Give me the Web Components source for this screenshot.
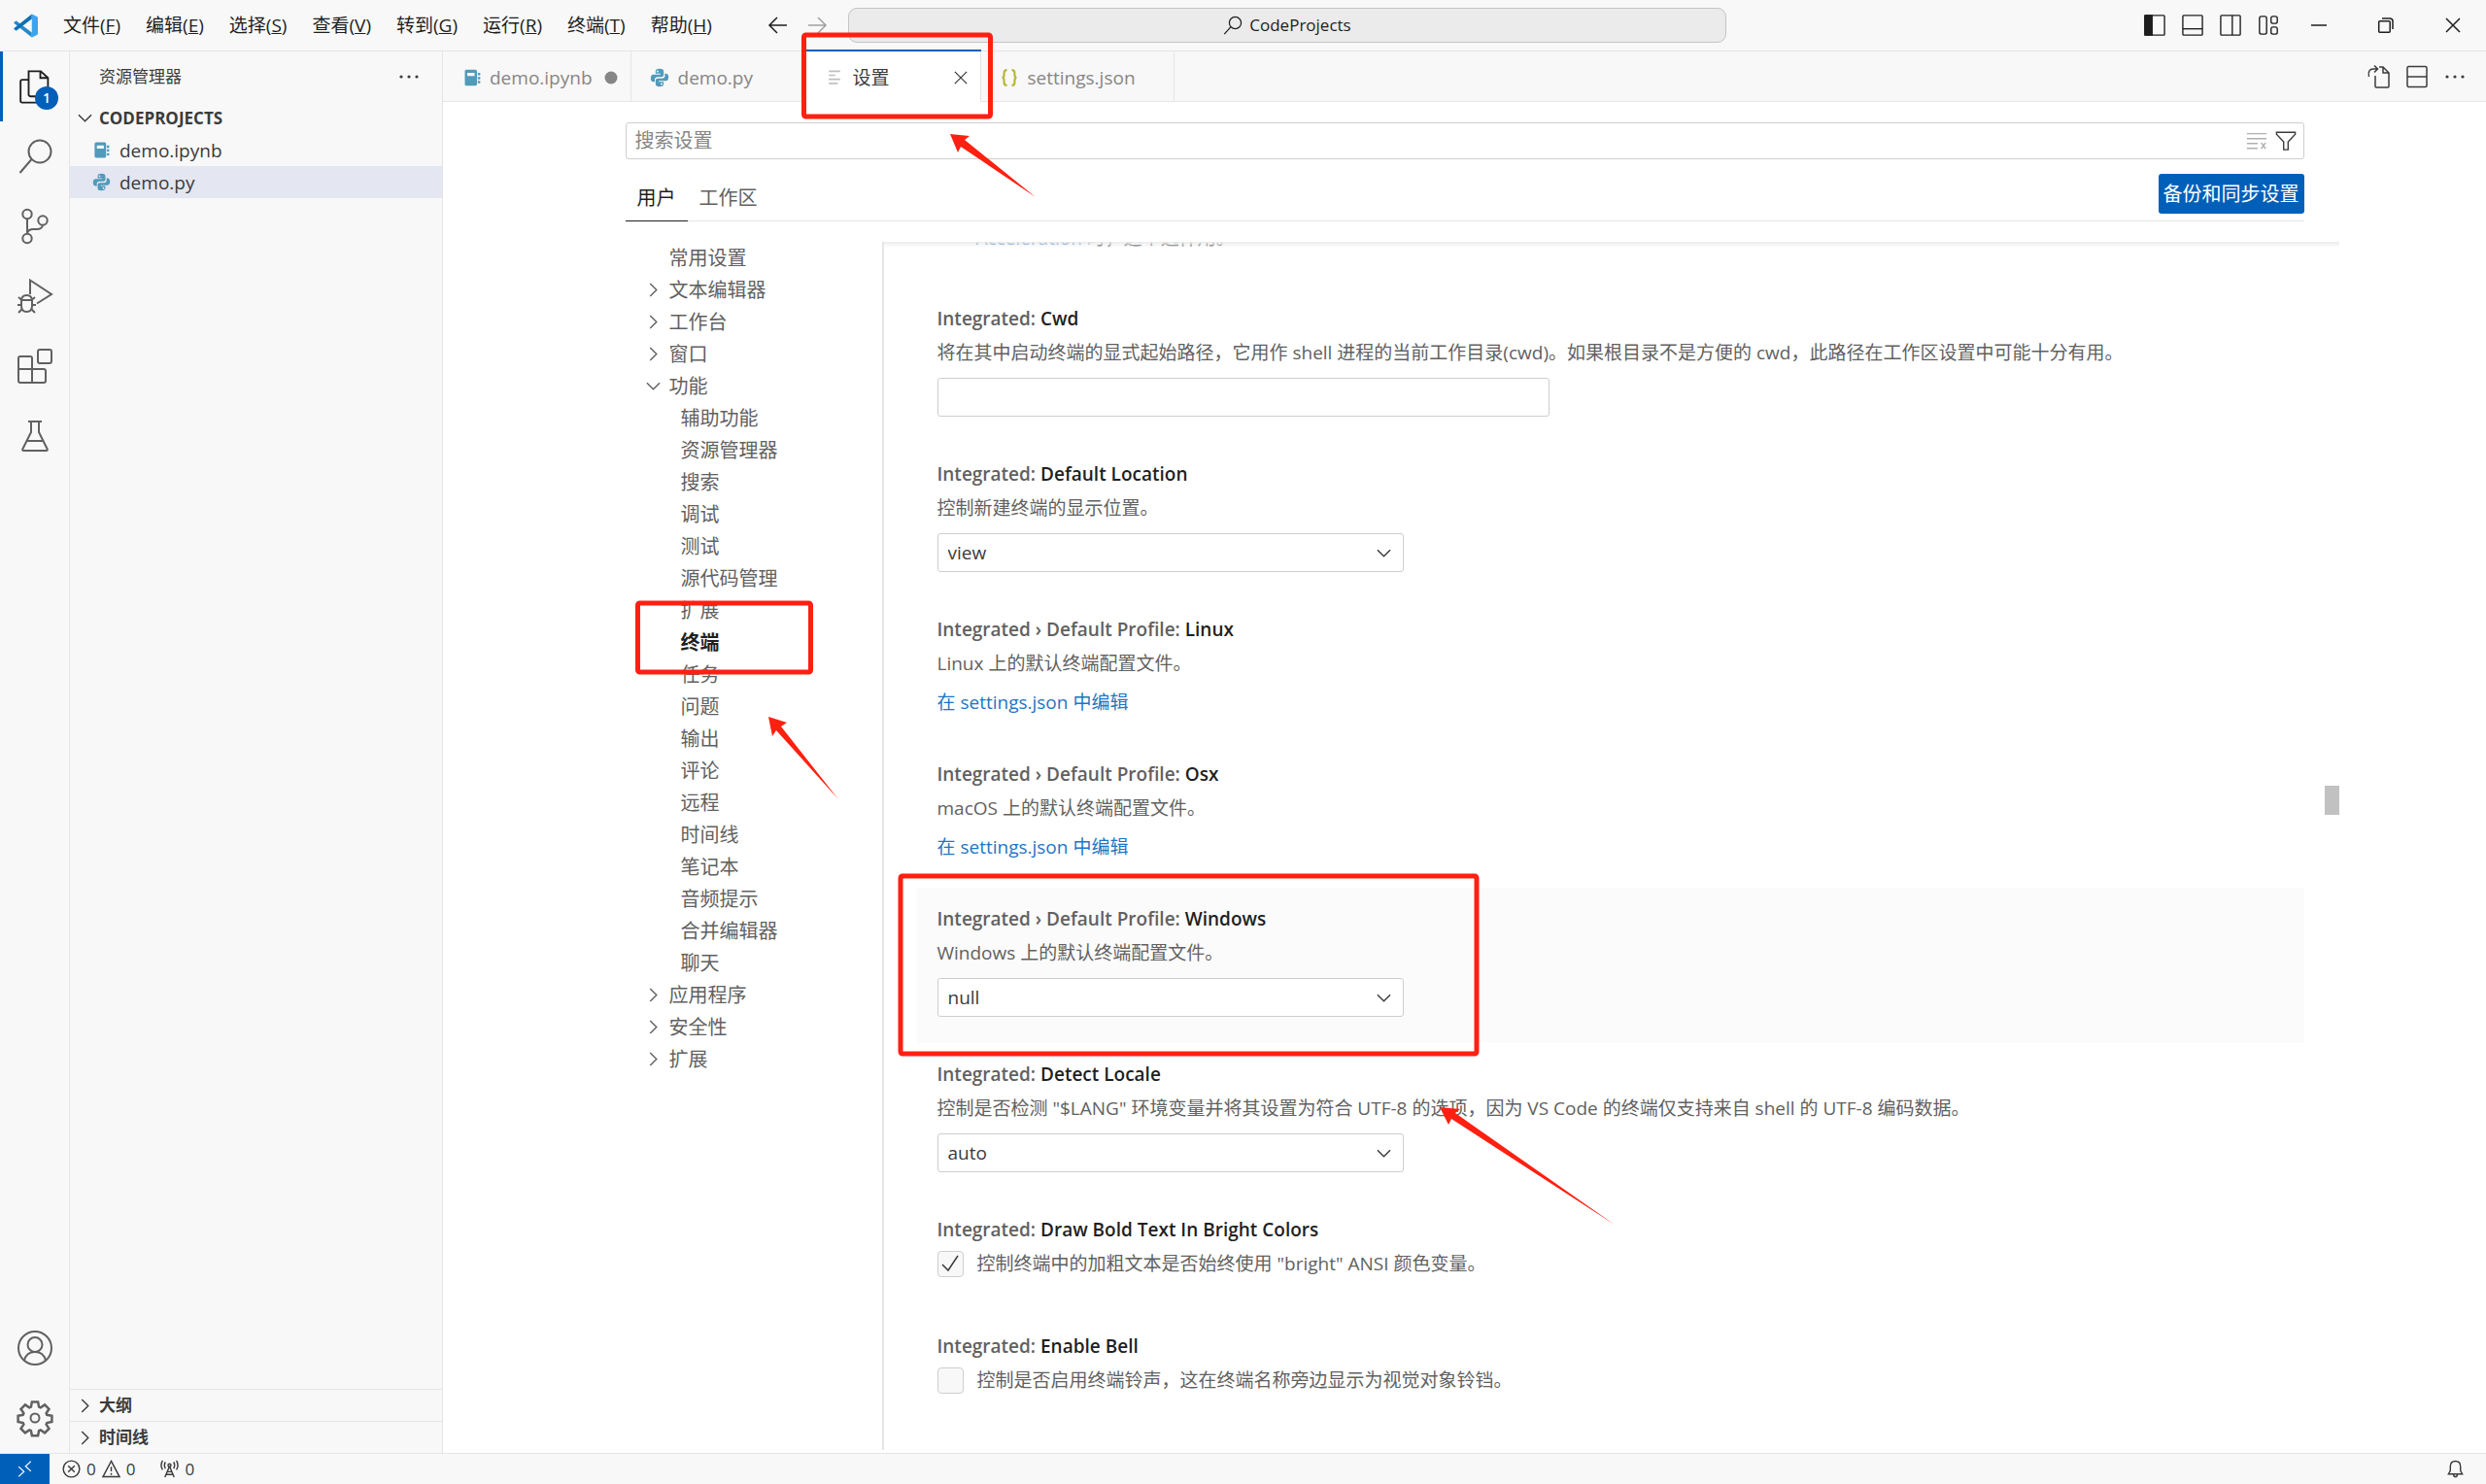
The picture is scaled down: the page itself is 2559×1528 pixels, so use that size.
<!DOCTYPE html>
<html lang="zh-CN">
<head>
<meta charset="utf-8">
<title>设置 - CodeProjects - Visual Studio Code</title>
<style>
  html, body { height: 100%; margin: 0; }
  body {
    font: 19px/28px "Open Sans", "Noto Sans CJK SC", sans-serif;
    color: #3b3b3b;
    overflow: hidden;
    position: relative;
  }
</style>
</head>
<body>
<code-window></code-window>

<script>
const ICONS = {
  logo: ['0 0 100 100', '<path fill="#2489ca" stroke="none" d="M2 36l6-5q2-2 5 0L75 78v20L2 40q-2-2 0-4z"/><path fill="#1070b3" stroke="none" d="M2 64l6 5q2 2 5 0L75 22V2L2 60q-2 2 0 4z"/><path fill="#3ba6ee" stroke="none" d="M72 97q3 2 6 0l18-9q4-2 4-6V18q0-4-4-6L78 3q-4-2-7 1 4-3 4 2v88q0 5-4 2z"/>'],
  back: ['0 0 20 20', '<path d="M19 10H2M9 2L1 10l8 8"/>'],
  forward: ['0 0 20 20', '<path d="M1 10h17M11 2l8 8-8 8"/>'],
  search: ['0 0 24 24', '<circle cx="15" cy="9" r="7.3"/><path d="M9.6 14L1.5 23"/>'],
  left: ['0 0 24 24', '<rect x="1" y="1" width="22" height="22" rx="1"/><path fill="currentColor" d="M1 1h8v22H1z"/>'],
  bottom: ['0 0 24 24', '<rect x="1" y="1" width="22" height="22" rx="1"/><path d="M1 16h22"/>'],
  right: ['0 0 24 24', '<rect x="1" y="1" width="22" height="22" rx="1"/><path d="M14 1v22"/>'],
  custom: ['0 0 24 24', '<rect x="2" y="2" width="8" height="20" rx="2"/><rect x="15" y="2" width="7" height="8" rx="2"/><rect x="15" y="14" width="7" height="8" rx="2"/>'],
  min: ['0 0 16 16', '<path d="M0 8h16"/>'],
  restore: ['0 0 16 16', '<rect x=".7" y="3.7" width="11.5" height="11.5" rx="1"/><path d="M4 1h8q3 0 3 3v8"/>'],
  close: ['0 0 16 16', '<path d="M1 1l14 14M15 1L1 15"/>'],
  more: ['0 0 24 24', '<g fill="currentColor" stroke="none"><circle cx="4" cy="12" r="1.6"/><circle cx="12" cy="12" r="1.6"/><circle cx="20" cy="12" r="1.6"/></g>'],
  files: ['0 0 36 40', '<path d="M11.500 2.500H25l8 7.500v18.500q0 2-2 2H13.500q-2 0-2-2zM24.500 2.500V10H33M11 12H4.500q-2 0-2 2v21.500q0 2 2 2H20q2 0 2-2V31"/>'],
  find: ['0 0 36 36', '<circle cx="23" cy="13" r="11.500"/><path d="M14.500 21L2.500 35"/>'],
  git: ['0 0 36 36', '<circle cx="10" cy="5.500" r="4.700"/><circle cx="26" cy="12" r="4.700"/><circle cx="10" cy="30.500" r="4.700"/><path d="M10 10v16M26 17q-1 4-6 4h-4q-5 0-6 4.500"/>'],
  debug: ['0 0 36 36', '<path d="M13 16V1.500L35 16l-15 9.500M4 22h11M3.500 27H0M19 27h-3.500M4.500 22L1 19M14.500 22L18 19M4.500 31.500L1 35M14.500 31.500L18 35"/><path d="M4 23q0-6 5.500-6T15 23v5q0 6-5.500 6T4 28z"/>'],
  ext: ['0 0 36 36', '<path d="M3 8h10q2 0 2 2v11H1V10q0-2 2-2zM1 21v12q0 2 2 2h12V21M15 21h12q2 0 2 2v10q0 2-2 2H15"/><rect x="21" y="1" width="14" height="14" rx="2"/>'],
  flask: ['0 0 36 36', '<path d="M11 3h14M14 3v11L5.500 31q-1 2 1 2h23q2 0 1-2L22 14V3M9.500 23h17"/>'],
  account: ['0 0 36 36', '<circle cx="18" cy="18" r="17"/><circle cx="18" cy="14.500" r="7.500"/><path d="M7 31q2-9 11-9t11 9"/>'],
  gear: ['0 0 36 36', '<path stroke-width="2.500" d="M14.900 1.500h6.200l1 5.100 1.700.7 4.300-2.900 4.400 4.400-2.900 4.300.7 1.700 5.100 1v6.200l-5.100 1-.7 1.700 2.900 4.300-4.400 4.400-4.300-2.900-1.700.7-1 5.100h-6.200l-1-5.100-1.700-.7-4.300 2.900-4.400-4.400 2.900-4.300-.7-1.700-5.100-1v-6.200l5.100-1 .7-1.700-2.900-4.300 4.400-4.400 4.300 2.900 1.700-.7z"/><circle cx="18" cy="18" r="4.500"/>'],
  book: ['0 0 24 24', '<g fill="#519aba" stroke="none"><path fill-rule="evenodd" d="M5 2h11q2 0 2 2v16q0 2-2 2H5q-2 0-2-2V4q0-2 2-2zm1 4v4h9V6z"/><path d="M19 6h3v3h-3zM19 11h3v3h-3zM19 16h3v3h-3z"/></g>'],
  python: ['0 0 24 24', '<g fill="#519aba" stroke="none"><path fill-rule="evenodd" d="M12 1C8 1 7 2.500 7 4.500V7h6v1H4.500C2 8 1 10 1 12.500S2 17 4.500 17H6v-3c0-2 1.500-3 3.500-3h5c1.500 0 2.500-1 2.500-2.500v-4C17 2 15.500 1 12 1zM9.500 3a1.200 1.200 0 110 2.400 1.200 1.200 0 010-2.400z"/><path fill-rule="evenodd" d="M12 23c4 0 5-1.500 5-3.500V17h-6v-1h8.500c2.500 0 3.500-2 3.500-4.500S22 7 19.500 7H18.500v3c0 2-1.500 3-3.500 3h-5C8.500 13 7 14 7 15.500v4C7 22 8.500 23 12 23zm2.500-4.400a1.200 1.200 0 110 2.400 1.200 1.200 0 010-2.400z"/></g>'],
  lines: ['0 0 24 24', '<path stroke="#c0c0c0" stroke-width="2" d="M5 4h14M5 9h8M5 14h14M5 19h11"/>'],
  json: ['0 0 24 24', '<path stroke="#b7b73b" stroke-width="2.600" d="M9 2.500Q5.500 2.500 5.500 6v2.500Q5.500 12 3 12q2.500 0 2.500 3.500V18q0 3.500 3.500 3.500M15 2.500q3.500 0 3.500 3.500v2.500Q18.500 12 21 12q-2.500 0-2.500 3.500V18q0 3.500-3.500 3.500"/>'],
  dot: ['0 0 16 16', '<circle cx="7" cy="8" r="6.500" fill="#868686" stroke="none"/>'],
  openfile: ['0 0 24 24', '<path d="M8 11v11q0 1 1 1h12q1 0 1-1V8l-6-6h-4M16 2v6h6M1.500 12Q0 4 6 4h4M7 .5L10.500 4 7 7.500"/>'],
  split: ['0 0 24 24', '<rect x="2" y="1.500" width="20" height="21" rx="1.500"/><path d="M2 12h20"/>'],
  clear: ['0 0 24 24', '<path d="M1 4h22M1 9.500h22M1 15h12M1 20.500h12M17 14l5 7M22 14l-5 7"/>'],
  filter: ['0 0 24 24', '<path d="M1.500 2.500h21v2l-8 8.500v9h-5v-9l-8-8.500z"/>'],
  down: ['0 0 16 16', '<path d="M1 4.500l7 7 7-7"/>'],
  next: ['0 0 16 16', '<path d="M4.500 1l7 7-7 7"/>'],
  check: ['0 0 24 24', '<path d="M4 13l6 6L20 4"/>'],
  remote: ['0 0 24 24', '<path d="M4 9l7 6.500L4 22M20 2l-7 6.500 7 6.500"/>'],
  error: ['0 0 20 20', '<circle cx="10" cy="10" r="8.800"/><path d="M6.500 6.500l7 7M13.500 6.500l-7 7"/>'],
  warn: ['0 0 20 20', '<path d="M10 1.500L19 18.500H1zM10 7.500v5M10 14.500v2"/>'],
  radio: ['0 0 20 20', '<path d="M10 7L5 19M10 7l5 12M8 13h4M6.500 16h7M5.500 2.500q-2 3.500 0 7M2.500 1q-3 5 0 10M14.500 2.500q2 3.500 0 7M17.500 1q3 5 0 10"/><circle cx="10" cy="6" r="1.600"/>'],
  bell: ['0 0 20 20', '<path d="M10 1.500q-5.500 0-5.500 6V12L2.500 15.500h15L15.500 12V7.500q0-6-5.500-6zM8 16q0 2.500 2 2.500t2-2.500"/>']
};

class UiIcon extends HTMLElement {
  connectedCallback() {
    const [box, art] = ICONS[this.getAttribute('name')];
    const size = this.getAttribute('size') || 24;
    this.attachShadow({ mode: 'open' }).innerHTML = `
      <style>
        :host { display: block; flex: none; width: ${size}px; height: ${size}px; }
        svg { display: block; width: 100%; height: 100%; overflow: visible; fill: none;
              stroke: currentColor; stroke-width: var(--stroke, 1.5px); }
      </style>
      <svg viewBox="${box}" aria-hidden="true">${art}</svg>`;
  }
}

const define = (name, html) => {
  const template = document.createElement('template');
  template.innerHTML = html;
  customElements.define(name, class extends HTMLElement {
    connectedCallback() {
      if (this.shadowRoot) return;
      this.attachShadow({ mode: 'open' }).append(template.content.cloneNode(true));
    }
  });
};

const icon = (name, size) => `<ui-icon name="${name}" size="${size}"></ui-icon>`;
const RESET = 'button { all: unset; box-sizing: border-box; cursor: pointer; }';

/* Title bar: menu, command centre, window controls */
define('title-bar', `
  <style>
    :host { display: grid; grid-template-columns: 1fr 904px 782px; align-items: center; height: 52px;
            background: #f8f8f8; border-bottom: 1px solid #e5e5e5; color: #1e1e1e; }
    ${RESET}
    .side, nav, .layout, .win { display: flex; align-items: center; }
    .side { padding-left: 14px; white-space: nowrap; }
    nav { margin-left: 13px; }
    nav button { padding: 0 13px; }
    .history { display: flex; gap: 20px; margin: 0 22px 0 auto; }
    .history button:last-child { opacity: .4; }
    .command { display: flex; align-items: center; justify-content: center; gap: 7px; height: 36px;
               border: 1px solid #c4c4c4; border-radius: 9px; background: #ebebeb; font-size: 17px; }
    .end { display: flex; align-items: center; justify-content: flex-end; }
    .layout { gap: 17px; margin-right: 6px; }
    .win button { width: 69px; display: grid; place-items: center; }
  </style>
  <div class="side">
    ${icon('logo', 25)}
    <nav>
      <button>文件(<u>F</u>)</button><button>编辑(<u>E</u>)</button><button>选择(<u>S</u>)</button>
      <button>查看(<u>V</u>)</button><button>转到(<u>G</u>)</button><button>运行(<u>R</u>)</button>
      <button>终端(<u>T</u>)</button><button>帮助(<u>H</u>)</button>
    </nav>
    <div class="history"><button aria-label="后退">${icon('back', 20)}</button><button aria-label="前进">${icon('forward', 20)}</button></div>
  </div>
  <button class="command">${icon('search', 20)}CodeProjects</button>
  <div class="end">
    <div class="layout">
      <button aria-label="主侧栏">${icon('left', 22)}</button><button aria-label="面板">${icon('bottom', 22)}</button>
      <button aria-label="辅助侧栏">${icon('right', 22)}</button><button aria-label="自定义布局">${icon('custom', 22)}</button>
    </div>
    <div class="win"><button aria-label="最小化">${icon('min', 16)}</button><button aria-label="还原">${icon('restore', 16)}</button><button aria-label="关闭">${icon('close', 16)}</button></div>
  </div>`);

define('activity-bar', `
  <style>
    :host { display: flex; flex-direction: column; width: 71px; background: #f8f8f8;
            border-right: 1px solid #e5e5e5; color: #616161; --stroke: 2px; }
    ${RESET}
    button { position: relative; display: grid; place-items: center; height: 72px; }
    .active { color: #1f1f1f; box-shadow: inset 3px 0 #005fb8; }
    .badge { position: absolute; right: 11px; bottom: 12px; width: 24px; height: 24px; border-radius: 12px;
             background: #005fb8; color: #fff; font-size: 14px; font-weight: 600; line-height: 24px; text-align: center; }
    .gap { flex: 1; }
  </style>
  <button class="active" aria-label="资源管理器">${icon('files', 37)}<span class="badge">1</span></button>
  <button aria-label="搜索">${icon('find', 36)}</button>
  <button aria-label="源代码管理">${icon('git', 36)}</button>
  <button aria-label="运行和调试">${icon('debug', 36)}</button>
  <button aria-label="扩展">${icon('ext', 36)}</button>
  <button aria-label="测试">${icon('flask', 36)}</button>
  <div class="gap"></div>
  <button aria-label="帐户">${icon('account', 36)}</button>
  <button aria-label="管理">${icon('gear', 36)}</button>`);

define('side-bar', `
  <style>
    :host { display: flex; flex-direction: column; width: 383px; background: #f8f8f8; border-right: 1px solid #e5e5e5; }
    ${RESET}
    header { display: flex; align-items: center; justify-content: space-between; height: 52px;
             padding: 0 22px 0 30px; font-size: 17px; }
    .row { display: flex; align-items: center; height: 33px; }
    .head { padding-left: 8px; gap: 7px; font-size: 17px; font-weight: 700; }
    .file { padding-left: 23px; gap: 9px; }
    .selected { background: #e4e6f1; }
    .gap { flex: 1; }
    .section { border-top: 1px solid #e5e5e5; }
  </style>
  <header>资源管理器<button aria-label="更多">${icon('more', 24)}</button></header>
  <button class="row head">${icon('down', 15)}CODEPROJECTS</button>
  <button class="row file">${icon('book', 19)}demo.ipynb</button>
  <button class="row file selected">${icon('python', 19)}demo.py</button>
  <div class="gap"></div>
  <button class="row head section">${icon('next', 15)}大纲</button>
  <button class="row head section">${icon('next', 15)}时间线</button>`);

define('editor-tab', `
  <style>
    :host { display: grid; grid-template-columns: 29px auto 1fr; gap: 4px; align-items: center; box-sizing: border-box;
            min-width: 180px; height: 52px; padding: 2px 0 0 15px; color: #868686;
            border-right: 1px solid #e5e5e5; border-bottom: 1px solid #e5e5e5; }
    :host([active]) { background: #fff; color: #3b3b3b; border-bottom-color: #fff; box-shadow: 0 -2px #005fb8; }
    .icon { display: grid; place-items: center; }
    .end { justify-self: end; width: 27px; margin-left: 8px; display: grid; place-items: center start; }
  </style>
  <span class="icon"><slot name="icon"></slot></span><slot></slot><span class="end"><slot name="end"></slot></span>`);

define('tab-strip', `
  <style>
    :host { display: flex; height: 52px; background: #f8f8f8; }
    ${RESET}
    .rest { flex: 1; display: flex; align-items: center; justify-content: flex-end; gap: 15px; padding-right: 20px;
            border-bottom: 1px solid #e5e5e5; }
  </style>
  <editor-tab><ui-icon slot="icon" name="book" size="20"></ui-icon>demo.ipynb<ui-icon slot="end" name="dot" size="16"></ui-icon></editor-tab>
  <editor-tab><ui-icon slot="icon" name="python" size="20"></ui-icon>demo.py</editor-tab>
  <editor-tab active><ui-icon slot="icon" name="lines" size="20"></ui-icon>设置<button slot="end" aria-label="关闭">${icon('close', 14)}</button></editor-tab>
  <editor-tab><ui-icon slot="icon" name="json" size="20"></ui-icon>settings.json</editor-tab>
  <div class="rest"><button aria-label="打开设置(json)">${icon('openfile', 24)}</button><button aria-label="拆分编辑器">${icon('split', 24)}</button><button aria-label="更多">${icon('more', 24)}</button></div>`);

define('settings-header', `
  <style>
    :host { display: block; padding: 21px 36px; }
    ${RESET}
    .search { display: flex; align-items: center; gap: 8px; box-sizing: border-box; height: 38px; padding: 0 7px 0 9px;
              border: 1px solid #cecece; border-radius: 3px; }
    input { flex: 1; border: 0; padding: 0; outline: 0; background: none; font: inherit; font-size: 20px; color: inherit; }
    input::placeholder { color: #868686; }
    .muted { opacity: .4; }
    .scope { display: flex; align-items: flex-end; height: 63px; border-bottom: 1px solid #e5e5e5; font-size: 20px; }
    .scope button { height: 47px; line-height: 47px; padding: 0 12px; color: #616161; }
    .scope .on { color: #1f1f1f; box-shadow: 0 1px #1f1f1f; }
    .scope .sync { height: 41px; line-height: 41px; padding: 0 5px; margin: 0 0 7px auto; border-radius: 3px; background: #005fb8;
                   color: #fff; }
  </style>
  <div class="search"><input aria-label="搜索设置" placeholder="搜索设置"><button class="muted" aria-label="清除">${icon('clear', 22)}</button><button aria-label="筛选">${icon('filter', 22)}</button></div>
  <div class="scope"><button class="on">用户</button><button>工作区</button><button class="sync">备份和同步设置</button></div>`);

const TOC = [['常用设置'], ['文本编辑器', 'next'], ['工作台', 'next'], ['窗口', 'next'], ['功能', 'down'],
  ...['辅助功能', '资源管理器', '搜索', '调试', '测试', '源代码管理', '扩展', '终端', '任务', '问题', '输出', '评论', '远程',
      '时间线', '笔记本', '音频提示', '合并编辑器', '聊天'].map(t => [t, 'leaf']),
  ['应用程序', 'next'], ['安全性', 'next'], ['扩展', 'next']];
define('settings-toc', `
  <style>
    :host { display: block; width: 264px; padding-left: 36px; border-right: 2px solid #e5e5e5; box-sizing: content-box; }
    ${RESET}
    button { display: grid; grid-template-columns: 15px 1fr; gap: 9px; align-items: center; width: 100%; height: 33px;
             padding-left: 21px; font-size: 20px; color: #616161; }
    button span { grid-column: 2; }
    .leaf { padding-left: 33px; }
    .current { font-weight: 700; color: #1f1f1f; }
  </style>
  ${TOC.map(([t, k]) => `<button class="${k === 'leaf' ? 'leaf' : ''} ${t === '终端' ? 'current' : ''}">${k === 'next' || k === 'down' ? icon(k, 15) : ''}<span>${t}</span></button>`).join('')}`);

/* One setting: category, name, description and its control */
class SettingItem extends HTMLElement {
  connectedCallback() {
    const a = n => this.getAttribute(n) || '';
    const kind = a('kind');
    const text = '<slot></slot>';
    const body = {
      text: `<label class="desc" for="c">${text}</label><input id="c" type="text">`,
      select: `<label class="desc" for="c">${text}</label><div class="pick"><select id="c"><option>${a('value')}</option></select>${icon('down', 15)}</div>`,
      link: `<div class="desc">${text}</div><a href="#">在 settings.json 中编辑</a>`,
      check: `<div class="tick"><span class="box"><input id="c" type="checkbox" ${this.hasAttribute('checked') ? 'checked' : ''}>${this.hasAttribute('checked') ? icon('check', 24) : ''}</span><label class="desc" for="c">${text}</label></div>`
    }[kind];
    this.attachShadow({ mode: 'open' }).innerHTML = `
      <style>
        :host { display: flex; flex-direction: column; align-items: flex-start; padding: 18px 21px 27px; }
        :host([focused]) { background: #fbfbfb; }
        .name { color: #1f1f1f; font-weight: 600; margin-bottom: 7px; }
        .name span { color: #616161; }
        .desc { color: #616161; }
        input[type=text], select { box-sizing: border-box; width: 630px; height: 40px; margin: 12px 0 0; padding: 0 10px; appearance: none;
          border: 1px solid #cecece; border-radius: 3px; background: #fff; font: inherit; color: #3b3b3b; }
        .pick { display: grid; align-items: center; margin-top: 12px; width: 480px; }
        .pick > * { grid-area: 1 / 1; }
        .pick select { width: 100%; margin: 0; }
        .pick ui-icon { justify-self: end; margin-right: 13px; pointer-events: none; }
        a { margin-top: 12px; line-height: 29px; color: #1f75c4; text-decoration: none; }
        .tick { display: flex; align-items: center; gap: 14px; margin-bottom: 12px; }
        .box { display: grid; place-items: center; width: 27px; height: 28px; }
        .box > * { grid-area: 1 / 1; pointer-events: none; }
        .box input { appearance: none; box-sizing: border-box; width: 27px; height: 27px; margin: 0; border: 1px solid #cecece;
          border-radius: 4px; background: #f8f8f8; pointer-events: auto; }
      </style>
      <div class="name"><span>${a('category')}:</span> ${a('name')}</div>${body}`;
  }
}

define('settings-list', `
  <style>
    :host { display: block; position: relative; flex: 1; min-width: 0; overflow: hidden; }
    .items { display: flex; flex-direction: column; margin: -18px 36px 0 34px; }
    .previous { margin: 0 0 37px 61px; color: #616161; }
    .previous a { color: #1f75c4; text-decoration: none; }
    .shade { position: absolute; inset: 0 0 auto; height: 6px; background: linear-gradient(#ececec, #ececec00); }
    .thumb { position: absolute; right: 0; top: 45%; width: 15px; height: 30px; background: #c1c1c1; }
  </style>
  <div class="items">
    <div class="previous"><a href="#">Acceleration</a> 时，这个选件用。</div>
    <setting-item kind="text" category="Integrated" name="Cwd">将在其中启动终端的显式起始路径，它用作 shell 进程的当前工作目录(cwd)。如果根目录不是方便的 cwd，此路径在工作区设置中可能十分有用。</setting-item>
    <setting-item kind="select" value="view" category="Integrated" name="Default Location">控制新建终端的显示位置。</setting-item>
    <setting-item kind="link" category="Integrated › Default Profile" name="Linux">Linux 上的默认终端配置文件。</setting-item>
    <setting-item kind="link" category="Integrated › Default Profile" name="Osx">macOS 上的默认终端配置文件。</setting-item>
    <setting-item focused kind="select" value="null" category="Integrated › Default Profile" name="Windows">Windows 上的默认终端配置文件。</setting-item>
    <setting-item kind="select" value="auto" category="Integrated" name="Detect Locale">控制是否检测 "$LANG" 环境变量并将其设置为符合 UTF-8 的选项，因为 VS Code 的终端仅支持来自 shell 的 UTF-8 编码数据。</setting-item>
    <setting-item kind="check" checked category="Integrated" name="Draw Bold Text In Bright Colors">控制终端中的加粗文本是否始终使用 "bright" ANSI 颜色变量。</setting-item>
    <setting-item kind="check" category="Integrated" name="Enable Bell">控制是否启用终端铃声，这在终端名称旁边显示为视觉对象铃铛。</setting-item>
  </div>
  <div class="shade"></div><div class="thumb"></div>`);

define('settings-editor', `
  <style>
    :host { display: flex; flex-direction: column; flex: 1; min-height: 0; box-sizing: border-box; width: 100%;
            max-width: 1800px; margin: 0 auto; padding-bottom: 3px; }
    .body { flex: 1; min-height: 0; display: flex; }
  </style>
  <settings-header></settings-header>
  <div class="body"><settings-toc></settings-toc><settings-list></settings-list></div>`);

define('status-bar', `
  <style>
    :host { display: flex; align-items: center; height: 31px; background: #f8f8f8; border-top: 1px solid #e5e5e5;
            font-size: 17px; }
    ${RESET}
    button { display: flex; align-items: center; gap: 6px; height: 100%; }
    .remote { width: 51px; justify-content: center; background: #005fb8; color: #fff; margin-right: 13px; }
    .radio { margin-left: 26px; }
    .bell { margin: 0 22px 0 auto; }
  </style>
  <button class="remote" aria-label="远程">${icon('remote', 19)}</button>
  <button>${icon('error', 19)}0 ${icon('warn', 19)}0</button>
  <button class="radio">${icon('radio', 19)}0</button>
  <button class="bell" aria-label="通知">${icon('bell', 19)}</button>`);

/* Red boxes and arrows laid over the window */
define('mark-layer', `
  <style>
    :host { position: absolute; inset: 0; pointer-events: none; }
    svg { display: block; width: 100%; height: 100%; }
    rect { fill: none; stroke: #ff2011; stroke-width: 5px; }
    path { fill: #ff2011; }
  </style>
  <svg aria-hidden="true">
    <rect x="827.500" y="36" width="192" height="84" rx="2"/>
    <rect x="656.500" y="621" width="178" height="71" rx="2"/>
    <rect x="927" y="902" width="593" height="183" rx="2"/>
    <path d="M978 138l20 2-5 4L1066 203 989 151l-3 6z"/>
    <path d="M791 738l19 6-6 4L863 823 799 752l-4 6z"/>
    <path d="M1482 1140l21 2-5 4L1662 1261 1494 1152l-3 6z"/>
  </svg>`);

define('code-window', `
  <style>
    :host { display: flex; flex-direction: column; height: 100%; background: #fff; }
    .main { flex: 1; min-height: 0; display: flex; }
    .editor { flex: 1; min-width: 0; display: flex; flex-direction: column; }
  </style>
  <title-bar></title-bar>
  <div class="main">
    <activity-bar></activity-bar><side-bar></side-bar>
    <div class="editor"><tab-strip></tab-strip><settings-editor></settings-editor></div>
  </div>
  <status-bar></status-bar>
  <mark-layer></mark-layer>`);

customElements.define('setting-item', SettingItem);
customElements.define('ui-icon', UiIcon);
</script>
</body>
</html>
